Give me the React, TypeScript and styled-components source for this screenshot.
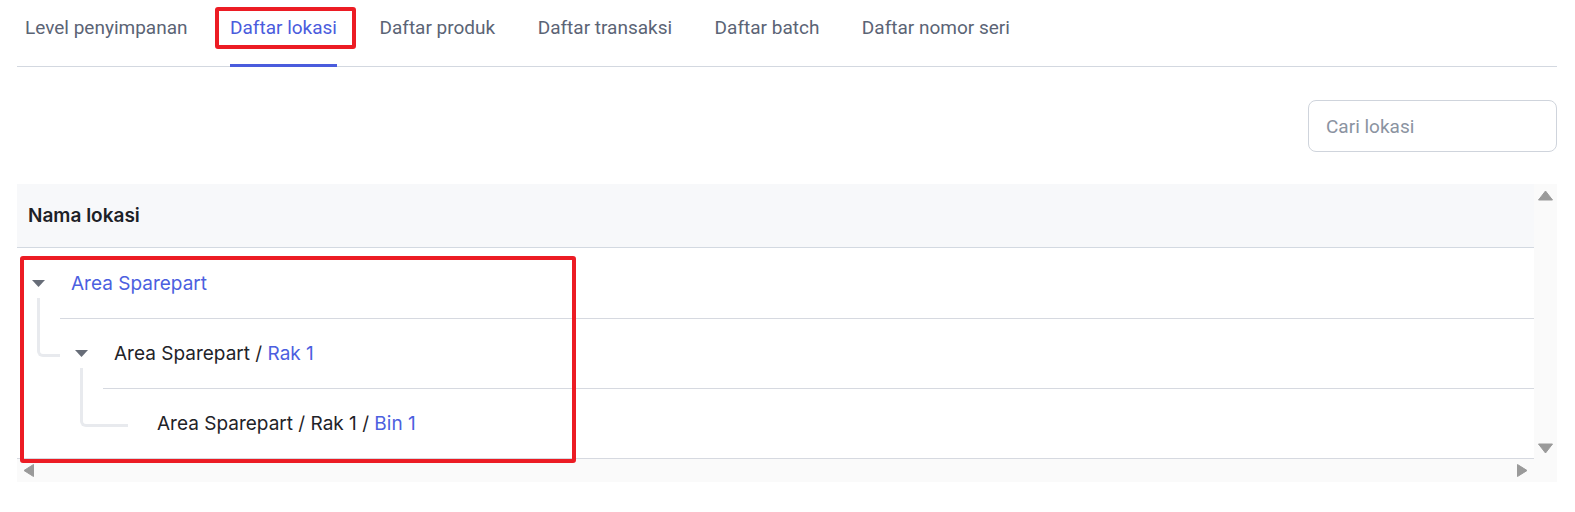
import styled, { createGlobalStyle } from 'styled-components';

const GlobalStyle = createGlobalStyle`
  body {
    margin: 0;
    background: #ffffff;
    font-family: Roboto, "Liberation Sans", sans-serif;
  }
`;

interface LocationNode {
  path: string[];
  level: number;
  expandable: boolean;
}

const tabs = [
  'Level penyimpanan',
  'Daftar lokasi',
  'Daftar produk',
  'Daftar transaksi',
  'Daftar batch',
  'Daftar nomor seri',
];

const nodes: LocationNode[] = [
  { path: ['Area Sparepart'], level: 0, expandable: true },
  { path: ['Area Sparepart', 'Rak 1'], level: 1, expandable: true },
  { path: ['Area Sparepart', 'Rak 1', 'Bin 1'], level: 2, expandable: false },
];

function Arrow({ dir }: { dir: 'up' | 'down' | 'left' | 'right' }) {
  const vertical = dir === 'up' || dir === 'down';
  const w = vertical ? 15 : 11;
  const h = vertical ? 11 : 13;
  const points = {
    up: '7.5,1 14.5,10 0.5,10',
    down: '0.5,1 14.5,1 7.5,10',
    left: '10.5,0.5 10.5,12.5 1,6.5',
    right: '0.5,0.5 0.5,12.5 10,6.5',
  }[dir];
  return (
    <svg width={w} height={h} viewBox={`0 0 ${w} ${h}`}>
      <polygon points={points} fill="#9a9a9a" stroke="#9a9a9a" strokeWidth="1" strokeLinejoin="round" />
    </svg>
  );
}

function Caret() {
  return (
    <svg width="13" height="7" viewBox="0 0 13 7">
      <polygon points="0,0 13,0 6.5,7" fill="#676d78" />
    </svg>
  );
}

export default function App() {
  return (
    <>
      <GlobalStyle />
      <Page>
        <TabBar>
          {tabs.map(tab => (
            <Tab key={tab} $active={tab === 'Daftar lokasi'}>
              {tab}
              {tab === 'Daftar lokasi' && <TabHighlight />}
            </Tab>
          ))}
        </TabBar>

        <Toolbar>
          <SearchInput placeholder="Cari lokasi" />
        </Toolbar>

        <TableFrame>
          <Table>
            <HeaderRow>Nama lokasi</HeaderRow>
            <Body>
              {nodes.map((node, i) => {
                const last = node.path[node.path.length - 1];
                const prefix = node.path.slice(0, -1);
                return (
                  <Row key={i} $level={node.level}>
                    {node.level > 0 && <Elbow $leaf={!node.expandable} />}
                    <CaretSlot>{node.expandable && <Caret />}</CaretSlot>
                    <Label>
                      {prefix.length > 0 && `${prefix.join(' / ')} / `}
                      <LinkText>{last}</LinkText>
                    </Label>
                  </Row>
                );
              })}
              <TreeHighlight />
            </Body>
          </Table>
          <VScroll>
            <Arrow dir="up" />
            <Arrow dir="down" />
          </VScroll>
          <HScroll>
            <Arrow dir="left" />
            <Arrow dir="right" />
          </HScroll>
          <Corner />
        </TableFrame>
      </Page>
    </>
  );
}

const Page = styled.div`
  padding: 0 18px 0 17px;
`;

const TabBar = styled.div`
  display: flex;
  gap: 42.5px;
  height: 67px;
  padding-left: 8px;
  box-sizing: border-box;
  border-bottom: 1px solid #d3d8e0;
`;

const Tab = styled.div<{ $active?: boolean }>`
  position: relative;
  flex-shrink: 0;
  height: 67px;
  box-sizing: border-box;
  padding-top: 16px;
  line-height: 24px;
  font-size: 19px;
  color: ${p => (p.$active ? '#4a5cdd' : '#5b6475')};

  ${p =>
    p.$active &&
    `
    &::after {
      content: '';
      position: absolute;
      left: 0;
      right: 0;
      bottom: 0;
      height: 3px;
      background: #4a5cdd;
    }
  `}
`;

const TabHighlight = styled.span`
  position: absolute;
  left: -15px;
  right: -19px;
  top: 7px;
  bottom: 18px;
  border: 4px solid #ec1c24;
  border-radius: 3px;
`;

const Toolbar = styled.div`
  display: flex;
  justify-content: flex-end;
  margin: 33px 0 32px;
`;

const SearchInput = styled.input`
  width: 249px;
  height: 52px;
  box-sizing: border-box;
  border: 1px solid #cfd4dc;
  border-radius: 8px;
  padding: 0 17px;
  font: inherit;
  font-size: 19px;
  color: #1f2328;
  outline: none;

  &::placeholder {
    color: #8b93a1;
  }
`;

const TableFrame = styled.div`
  display: grid;
  grid-template-columns: 1fr 23px;
  grid-template-rows: auto 23px;
  font-family: Inter, "Noto Sans", sans-serif;
`;

const Table = styled.div``;

const HeaderRow = styled.div`
  display: flex;
  align-items: center;
  height: 64px;
  box-sizing: border-box;
  padding-left: 11px;
  background: #f7f8fa;
  border-bottom: 1px solid #d3d9e1;
  font-size: 19px;
  font-weight: 600;
  color: #1d2127;
`;

const Body = styled.div`
  position: relative;
  border-bottom: 1px solid #d6d9e0;
`;

const Row = styled.div<{ $level: number }>`
  position: relative;
  display: flex;
  align-items: center;
  height: 70px;
  box-sizing: border-box;
  margin-left: ${p => p.$level * 43}px;
  padding-left: 15px;
  border-top: ${p => (p.$level > 0 ? '1px solid #d6d9e0' : 'none')};
`;

const Elbow = styled.span<{ $leaf: boolean }>`
  position: absolute;
  left: -23px;
  top: -21px;
  width: ${p => (p.$leaf ? 48 : 23)}px;
  height: 59px;
  box-sizing: border-box;
  border-left: 3px solid #e8eaee;
  border-bottom: 3px solid #e8eaee;
  border-bottom-left-radius: 6px;
`;

const CaretSlot = styled.span`
  display: flex;
  align-items: center;
  width: 13px;
  height: 7px;
  margin-right: 26px;
`;

const Label = styled.span`
  font-size: 19px;
  color: #1f2328;
  white-space: nowrap;
`;

const LinkText = styled.span`
  color: #4c5fe0;
`;

const TreeHighlight = styled.span`
  position: absolute;
  left: 3px;
  top: 8px;
  width: 556px;
  height: 207px;
  box-sizing: border-box;
  border: 4px solid #ec1c24;
  border-radius: 3px;
`;

const VScroll = styled.div`
  grid-column: 2;
  grid-row: 1;
  display: flex;
  flex-direction: column;
  justify-content: space-between;
  align-items: center;
  padding: 6px 0 5px;
  background: #fafafa;
`;

const HScroll = styled.div`
  grid-column: 1;
  grid-row: 2;
  display: flex;
  justify-content: space-between;
  align-items: center;
  padding: 0 6px;
  background: #fafafa;
`;

const Corner = styled.div`
  grid-column: 2;
  grid-row: 2;
  background: #fafafa;
`;
